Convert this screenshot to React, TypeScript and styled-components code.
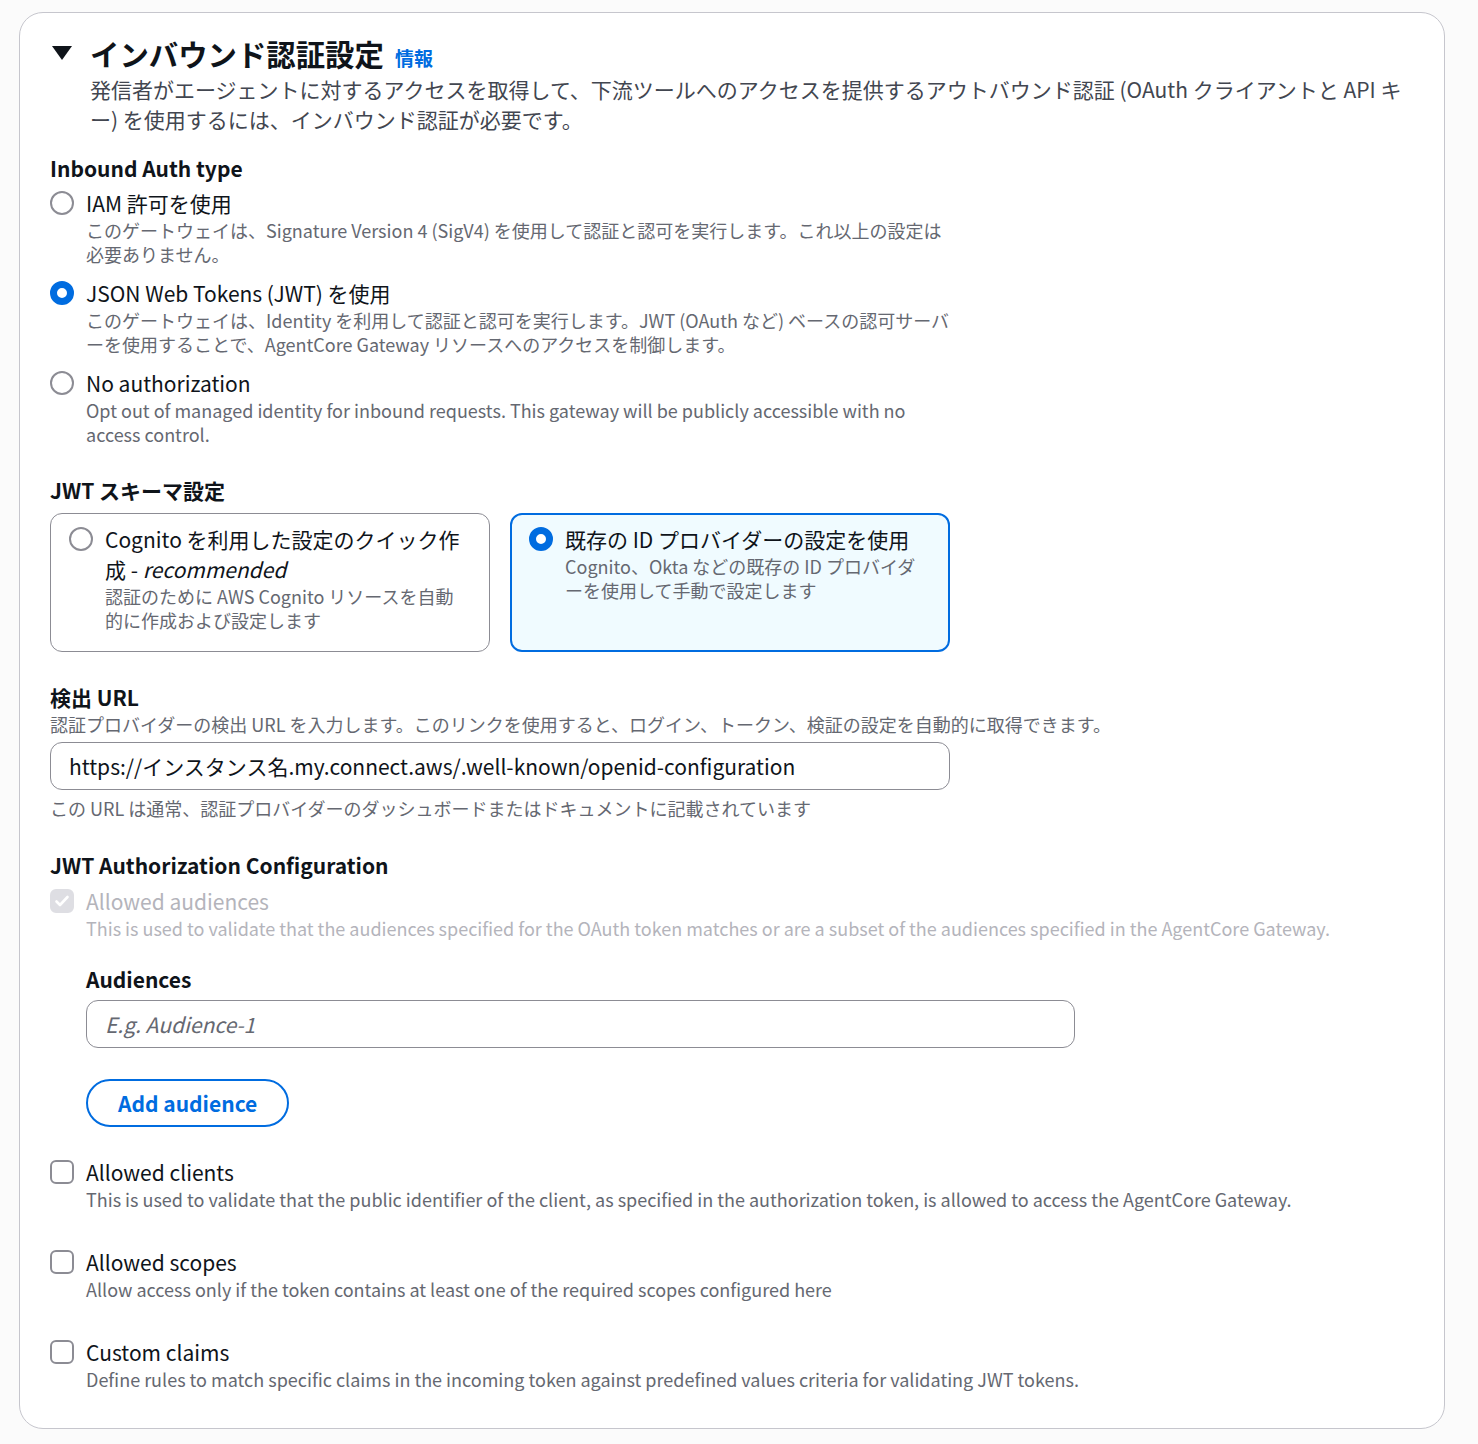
import React from 'react';
import styled, { createGlobalStyle, css } from 'styled-components';

const GlobalStyle = createGlobalStyle`
  html, body {
    margin: 0;
    padding: 0;
    background: #fbfbfb;
  }
  body {
    font-family: 'Noto Sans CJK JP', 'Noto Sans', sans-serif;
    color: #0f141a;
    -webkit-font-smoothing: antialiased;
  }
`;

const Page = styled.div`
  padding: 12px 33px 16px 19px;
`;

const Card = styled.section`
  background: #ffffff;
  border: 1px solid #c6c6cd;
  border-radius: 24px;
  padding: 4px 31px 37px 30px;
`;

const Header = styled.div`
  display: grid;
  grid-template-columns: 40px 1fr;
  align-items: start;
`;

const Caret = styled.svg`
  width: 20px;
  height: 14px;
  margin: 29px 0 0 2px;
`;

const TitleRow = styled.div`
  display: flex;
  align-items: baseline;
  gap: 11px;
  height: 36px;
  padding-top: 18px;
`;

const Title = styled.h2`
  margin: 0;
  font-size: 29.4px;
  line-height: 36px;
  font-weight: 700;
  color: #0f141a;
`;

const InfoLink = styled.a`
  font-size: 19px;
  font-weight: 700;
  color: #006ce0;
  text-decoration: none;
`;

const HeaderDescription = styled.p`
  margin: 3px 0 0;
  font-size: 21px;
  line-height: 30px;
  color: #424650;
`;

const FieldLabel = styled.div<{ $top: number }>`
  margin-top: ${(p) => p.$top}px;
  font-size: 21px;
  line-height: 30px;
  font-weight: 700;
`;

const FieldHint = styled.div`
  font-size: 18px;
  line-height: 24px;
  color: #656871;
`;

const RadioGroup = styled.div`
  max-width: 900px;
  margin-top: 5px;
  display: flex;
  flex-direction: column;
  gap: 12px;
`;

const OptionRow = styled.label<{ $top?: number }>`
  display: grid;
  grid-template-columns: 24px 1fr;
  column-gap: 12px;
  ${(p) => p.$top !== undefined && css`margin-top: ${p.$top}px;`}
`;

const RadioDot = styled.span<{ $checked?: boolean }>`
  box-sizing: border-box;
  width: 24px;
  height: 24px;
  margin-top: 3px;
  border-radius: 50%;
  background: #ffffff;
  border: ${(p) => (p.$checked ? '7px solid #006ce0' : '2px solid #8c8c94')};
`;

const CheckBox = styled.span<{ $disabled?: boolean }>`
  box-sizing: border-box;
  width: 24px;
  height: 24px;
  margin-top: 3px;
  border-radius: 6px;
  display: flex;
  align-items: center;
  justify-content: center;
  ${(p) =>
    p.$disabled
      ? css`
          background: #dedee3;
          border: 2px solid #dedee3;
        `
      : css`
          background: #ffffff;
          border: 2px solid #8c8c94;
        `}
`;

const OptionText = styled.div`
  display: flex;
  flex-direction: column;
`;

const OptionLabel = styled.span<{ $disabled?: boolean }>`
  font-size: 21px;
  line-height: 30px;
  color: ${(p) => (p.$disabled ? '#b4b4bb' : '#0f141a')};

  em {
    font-style: italic;
  }
`;

const OptionDescription = styled.span<{ $disabled?: boolean }>`
  font-size: 18px;
  line-height: 24px;
  color: ${(p) => (p.$disabled ? '#b4b4bb' : '#656871')};
`;

const Tiles = styled.div`
  max-width: 900px;
  margin-top: 8px;
  display: grid;
  grid-template-columns: 1fr 1fr;
  gap: 20px;
`;

const Tile = styled.label<{ $selected?: boolean }>`
  box-sizing: border-box;
  display: grid;
  grid-template-columns: 24px 1fr;
  align-content: start;
  column-gap: 12px;
  min-height: 139px;
  border-radius: 12px;
  ${(p) =>
    p.$selected
      ? css`
          border: 2px solid #006ce0;
          background: #f0fbff;
          padding: 9px 17px 17px 17px;
        `
      : css`
          border: 1px solid #8c8c94;
          background: #ffffff;
          padding: 10px 18px 18px 18px;
        `}
`;

const TextInput = styled.div<{ $placeholder?: boolean; $width: number }>`
  box-sizing: border-box;
  width: ${(p) => p.$width}px;
  height: 48px;
  margin-top: 6px;
  border: 1px solid #8c8c94;
  border-radius: 12px;
  padding: 0 18px;
  display: flex;
  align-items: center;
  font-size: 21px;
  ${(p) =>
    p.$placeholder
      ? css`
          color: #656871;
          font-style: italic;
        `
      : css`
          color: #0f141a;
        `}
`;

const Constraint = styled.div`
  margin-top: 6px;
  font-size: 18px;
  line-height: 24px;
  color: #656871;
`;

const Indented = styled.div`
  margin-left: 36px;
`;

const AddButton = styled.button`
  box-sizing: border-box;
  margin-top: 31px;
  height: 48px;
  padding: 0 30px;
  border: 2px solid #006ce0;
  border-radius: 24px;
  background: #ffffff;
  color: #006ce0;
  font-family: inherit;
  font-size: 21px;
  font-weight: 700;
  cursor: pointer;
`;

const Radio = ({ checked, label, description }: { checked?: boolean; label: React.ReactNode; description: string }) => (
  <OptionRow>
    <RadioDot $checked={checked} />
    <OptionText>
      <OptionLabel>{label}</OptionLabel>
      <OptionDescription>{description}</OptionDescription>
    </OptionText>
  </OptionRow>
);

const Check = ({
  top,
  checked,
  disabled,
  label,
  description,
}: {
  top: number;
  checked?: boolean;
  disabled?: boolean;
  label: string;
  description: string;
}) => (
  <OptionRow $top={top}>
    <CheckBox $disabled={disabled}>
      {checked && (
        <svg width="16" height="16" viewBox="0 0 16 16">
          <path d="M2.5 8.5l3.5 3.5 7.5-8" fill="none" stroke="#ffffff" strokeWidth="2.6" strokeLinecap="round" strokeLinejoin="round" />
        </svg>
      )}
    </CheckBox>
    <OptionText>
      <OptionLabel $disabled={disabled}>{label}</OptionLabel>
      <OptionDescription $disabled={disabled}>{description}</OptionDescription>
    </OptionText>
  </OptionRow>
);

export default function App() {
  return (
    <Page>
      <GlobalStyle />
      <Card>
        <Header>
          <Caret viewBox="0 0 20 14">
            <path d="M0 0h20L10 14z" fill="#0f141a" />
          </Caret>
          <div>
            <TitleRow>
              <Title>インバウンド認証設定</Title>
              <InfoLink href="#">情報</InfoLink>
            </TitleRow>
            <HeaderDescription>
              発信者がエージェントに対するアクセスを取得して、下流ツールへのアクセスを提供するアウトバウンド認証 (OAuth クライアントと API キー) を使用するには、インバウンド認証が必要です。
            </HeaderDescription>
          </div>
        </Header>

        <FieldLabel $top={19}>Inbound Auth type</FieldLabel>
        <RadioGroup>
          <Radio
            label="IAM 許可を使用"
            description="このゲートウェイは、Signature Version 4 (SigV4) を使用して認証と認可を実行します。これ以上の設定は必要ありません。"
          />
          <Radio
            checked
            label="JSON Web Tokens (JWT) を使用"
            description="このゲートウェイは、Identity を利用して認証と認可を実行します。JWT (OAuth など) ベースの認可サーバーを使用することで、AgentCore Gateway リソースへのアクセスを制御します。"
          />
          <Radio
            label="No authorization"
            description="Opt out of managed identity for inbound requests. This gateway will be publicly accessible with no access control."
          />
        </RadioGroup>

        <FieldLabel $top={29}>JWT スキーマ設定</FieldLabel>
        <Tiles>
          <Tile>
            <RadioDot />
            <OptionText>
              <OptionLabel>
                Cognito を利用した設定のクイック作成 - <em>recommended</em>
              </OptionLabel>
              <OptionDescription>認証のために AWS Cognito リソースを自動的に作成および設定します</OptionDescription>
            </OptionText>
          </Tile>
          <Tile $selected>
            <RadioDot $checked />
            <OptionText>
              <OptionLabel>既存の ID プロバイダーの設定を使用</OptionLabel>
              <OptionDescription>Cognito、Okta などの既存の ID プロバイダーを使用して手動で設定します</OptionDescription>
            </OptionText>
          </Tile>
        </Tiles>

        <FieldLabel $top={30}>検出 URL</FieldLabel>
        <FieldHint>認証プロバイダーの検出 URL を入力します。このリンクを使用すると、ログイン、トークン、検証の設定を自動的に取得できます。</FieldHint>
        <TextInput $width={900}>https://インスタンス名.my.connect.aws/.well-known/openid-configuration</TextInput>
        <Constraint>この URL は通常、認証プロバイダーのダッシュボードまたはドキュメントに記載されています</Constraint>

        <FieldLabel $top={30}>JWT Authorization Configuration</FieldLabel>
        <Check
          top={6}
          checked
          disabled
          label="Allowed audiences"
          description="This is used to validate that the audiences specified for the OAuth token matches or are a subset of the audiences specified in the AgentCore Gateway."
        />
        <Indented>
          <FieldLabel $top={24}>Audiences</FieldLabel>
          <TextInput $width={989} $placeholder>
            E.g. Audience-1
          </TextInput>
          <AddButton>Add audience</AddButton>
        </Indented>

        <Check
          top={30}
          label="Allowed clients"
          description="This is used to validate that the public identifier of the client, as specified in the authorization token, is allowed to access the AgentCore Gateway."
        />
        <Check
          top={36}
          label="Allowed scopes"
          description="Allow access only if the token contains at least one of the required scopes configured here"
        />
        <Check
          top={36}
          label="Custom claims"
          description="Define rules to match specific claims in the incoming token against predefined values criteria for validating JWT tokens."
        />
      </Card>
    </Page>
  );
}
